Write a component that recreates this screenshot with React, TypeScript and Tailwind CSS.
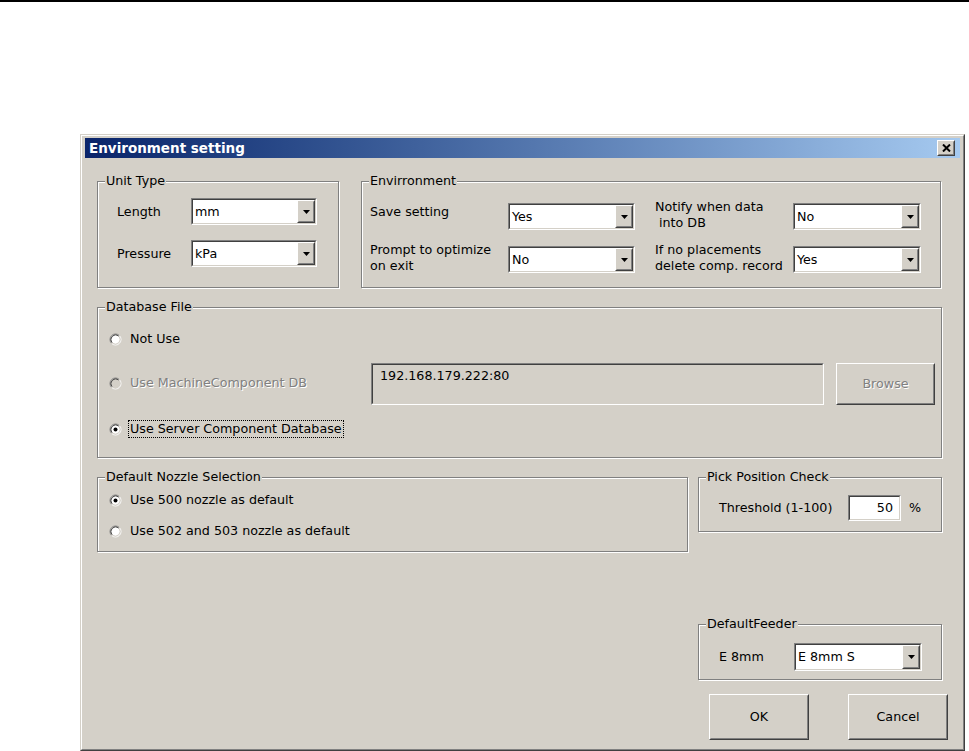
import React from 'react'

type BoxProps = { className?: string; inner?: string; children?: React.ReactNode }

// classic 3D edges
function Sunken({ className = '', inner = '', children }: BoxProps) {
  return (
    <div className={`border border-t-[#808080] border-l-[#808080] border-b-white border-r-white ${className}`}>
      <div className={`h-full w-full border border-t-[#404040] border-l-[#404040] border-b-[#d4d0c8] border-r-[#d4d0c8] ${inner}`}>
        {children}
      </div>
    </div>
  )
}

function Raised({ className = '', inner = '', children }: BoxProps) {
  return (
    <div className={`border border-t-white border-l-white border-b-[#404040] border-r-[#404040] ${className}`}>
      <div className={`h-full w-full border border-t-[#d4d0c8] border-l-[#d4d0c8] border-b-[#808080] border-r-[#808080] bg-[#d4d0c8] ${inner}`}>
        {children}
      </div>
    </div>
  )
}

function Combo({ value, className = '' }: { value: string; className?: string }) {
  return (
    <Sunken className={className} inner="bg-white flex">
      <span className="flex-1 pl-[2px] self-center leading-[16px]">{value}</span>
      <Raised className="w-[18px] h-full" inner="flex items-center justify-center">
        <svg width="7" height="4" viewBox="0 0 7 4">
          <polygon points="0,0 7,0 3.5,4" fill="#000" />
        </svg>
      </Raised>
    </Sunken>
  )
}

function Group({ title, className = '', children }: { title: string; className?: string; children?: React.ReactNode }) {
  return (
    <fieldset className={`m-0 p-0 min-w-0 border border-[#808080] shadow-[inset_1px_1px_0_#fff,1px_1px_0_#fff] ${className}`}>
      <legend className="ml-[7px] px-[1px] leading-[16px] bg-[#d4d0c8]">{title}</legend>
      {children}
    </fieldset>
  )
}

function RadioDot({ checked, disabled }: { checked?: boolean; disabled?: boolean }) {
  return (
    <svg width="13" height="13" viewBox="0 0 13 13" className="shrink-0">
      <circle cx="6.5" cy="6.5" r="4.5" fill={disabled ? '#d4d0c8' : '#fff'} />
      <path d="M10.39 2.61 A5.5 5.5 0 0 0 2.61 10.39" fill="none" stroke="#808080" />
      <path d="M2.61 10.39 A5.5 5.5 0 0 0 10.39 2.61" fill="none" stroke="#fff" />
      <path d="M9.68 3.32 A4.5 4.5 0 0 0 3.32 9.68" fill="none" stroke="#404040" />
      <path d="M3.32 9.68 A4.5 4.5 0 0 0 9.68 3.32" fill="none" stroke="#d4d0c8" />
      {checked && <circle cx="6.5" cy="6.5" r="2" fill="#000" />}
    </svg>
  )
}

function Radio({ label, checked, disabled, focused }: { label: string; checked?: boolean; disabled?: boolean; focused?: boolean }) {
  return (
    <div className="flex items-center h-[18px]">
      <RadioDot checked={checked} disabled={disabled} />
      {focused ? (
        <span className="ml-[6px] h-[18px] border border-dotted border-black pl-[1px] pr-[1px] leading-[16px]">{label}</span>
      ) : (
        <span className={`ml-[8px] leading-[16px] ${disabled ? 'text-[#808080] [text-shadow:1px_1px_0_#fff]' : ''}`}>{label}</span>
      )}
    </div>
  )
}

export default function App() {
  return (
    <div className="w-[969px] h-[751px] bg-white overflow-hidden font-['DejaVu_Sans',sans-serif] text-[12.7px] text-black">
      <div className="h-[2px] bg-black" />

      {/* dialog window */}
      <div className="ml-[80px] mt-[132px] w-[885px] h-[617px] border border-t-[#d4d0c8] border-l-[#d4d0c8] border-b-[#404040] border-r-[#404040] bg-[#d4d0c8]">
        <div className="h-full border border-t-white border-l-white border-b-[#808080] border-r-[#808080] pt-[2px] px-[3px]">
          <div className="h-[20px] flex items-center justify-between pl-[4px] pr-[5px] bg-linear-to-r from-[#0a246a] to-[#a6caf0]">
            <span className="text-white font-bold text-[13.5px] leading-[16px]">Environment setting</span>
            <Raised className="w-[18px] h-[16px] shrink-0" inner="flex items-center justify-center">
              <svg width="9" height="8" viewBox="0 0 9 8">
                <path d="M1 0.5 L8 7.5 M8 0.5 L1 7.5" stroke="#000" strokeWidth="2" />
              </svg>
            </Raised>
          </div>

          <div className="pl-[12px] pt-[15px]">
            {/* row 1 */}
            <div className="flex gap-[22px]">
              <Group title="Unit Type" className="w-[242px] h-[115px]">
                <div className="pl-[19px] pt-[9px] flex flex-col gap-[15px]">
                  <div className="flex items-center">
                    <span className="w-[74px]">Length</span>
                    <Combo value="mm" className="w-[126px] h-[27px]" />
                  </div>
                  <div className="flex items-center">
                    <span className="w-[74px]">Pressure</span>
                    <Combo value="kPa" className="w-[126px] h-[27px]" />
                  </div>
                </div>
              </Group>

              <Group title="Envirronment" className="w-[580px] h-[115px]">
                <div className="pl-[8px] pt-[14px] flex flex-col gap-[15px] leading-[16px]">
                  <div className="flex items-start">
                    <span className="w-[138px] mt-[1px]">Save setting</span>
                    <Combo value="Yes" className="w-[127px] h-[27px]" />
                    <span className="ml-[20px] w-[138px] -mt-[4px] whitespace-pre">{'Notify when data\n into DB'}</span>
                    <Combo value="No" className="w-[128px] h-[27px]" />
                  </div>
                  <div className="flex items-start">
                    <span className="w-[138px] -mt-[4px] whitespace-pre">{'Prompt to optimize\non exit'}</span>
                    <Combo value="No" className="w-[127px] h-[27px]" />
                    <span className="ml-[20px] w-[138px] -mt-[4px] whitespace-pre">{'If no placements\ndelete comp. record'}</span>
                    <Combo value="Yes" className="w-[128px] h-[27px]" />
                  </div>
                </div>
              </Group>
            </div>

            {/* row 2 */}
            <Group title="Database File" className="mt-[11px] w-[845px] h-[159px]">
              <div className="pl-[11px] flex flex-col">
                <div className="mt-[15px]">
                  <Radio label="Not Use" />
                </div>
                <div className="mt-[15px] flex items-start">
                  <div className="w-[262px] mt-[11px]">
                    <Radio label="Use MachineComponent DB" disabled />
                  </div>
                  <Sunken className="w-[453px] h-[42px]" inner="pl-[7px] pt-[3px] leading-[16px]">
                    192.168.179.222:80
                  </Sunken>
                  <Raised className="ml-[12px] w-[99px] h-[42px]" inner="flex items-center justify-center">
                    <span className="text-[#808080] [text-shadow:1px_1px_0_#fff]">Browse</span>
                  </Raised>
                </div>
                <div className="mt-[15px]">
                  <Radio label="Use Server Component Database" checked focused />
                </div>
              </div>
            </Group>

            {/* row 3 */}
            <div className="mt-[11px] flex gap-[10px] items-start">
              <Group title="Default Nozzle Selection" className="w-[591px] h-[83px]">
                <div className="pl-[11px] pt-[6px] flex flex-col gap-[13px]">
                  <Radio label="Use 500 nozzle as default" checked />
                  <Radio label="Use 502 and 503 nozzle as default" />
                </div>
              </Group>

              <div className="w-[244px] flex flex-col">
                <Group title="Pick Position Check" className="h-[63px]">
                  <div className="pl-[20px] pt-[10px] flex items-center">
                    <span className="w-[129px]">Threshold (1-100)</span>
                    <Sunken className="w-[53px] h-[26px]" inner="bg-white flex items-center justify-end pr-[6px]">
                      50
                    </Sunken>
                    <span className="ml-[8px]">%</span>
                  </div>
                </Group>

                <Group title="DefaultFeeder" className="mt-[84px] h-[64px]">
                  <div className="pl-[20px] pt-[11px] flex items-center">
                    <span className="w-[75px]">E 8mm</span>
                    <Combo value="E 8mm S" className="w-[128px] h-[28px]" />
                  </div>
                </Group>

                <div className="mt-[14px] pl-[11px] flex gap-[39px]">
                  <Raised className="w-[100px] h-[46px] shrink-0" inner="flex items-center justify-center">
                    OK
                  </Raised>
                  <Raised className="w-[100px] h-[46px] shrink-0" inner="flex items-center justify-center">
                    Cancel
                  </Raised>
                </div>
              </div>
            </div>
          </div>
        </div>
      </div>
    </div>
  )
}
